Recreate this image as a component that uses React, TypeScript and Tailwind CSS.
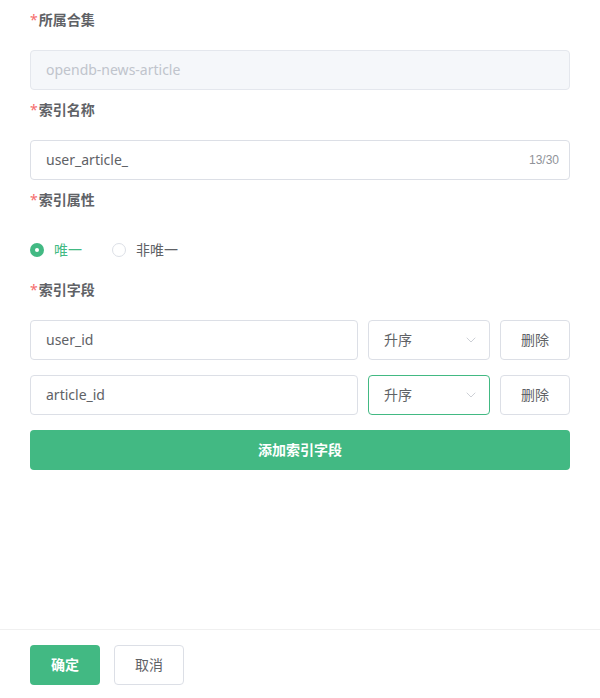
import { ChevronDown } from "lucide-react";

const font = { fontFamily: '"Noto Sans", "Noto Sans CJK SC", sans-serif' };

function Label({ text }: { text: string }) {
  return (
    <div className="h-10 flex items-center text-sm font-bold text-[#606266]">
      <span className="text-[#f56c6c] mr-[1px] font-normal">*</span>
      {text}
    </div>
  );
}

function SortSelect({ active }: { active?: boolean }) {
  return (
    <div
      className={`w-[122px] h-10 flex items-center justify-between pl-[15px] pr-[10px] rounded border bg-white text-sm text-[#606266] ${
        active ? "border-[#42b983]" : "border-[#dcdfe6]"
      }`}
    >
      <span>升序</span>
      <ChevronDown size={16} strokeWidth={1.2} className="text-[#c0c4cc]" />
    </div>
  );
}

function FieldRow({ name, active }: { name: string; active?: boolean }) {
  return (
    <div className="flex gap-[10px]">
      <div className="flex-1 h-10 flex items-center px-[15px] rounded border border-[#dcdfe6] text-sm text-[#606266]">
        {name}
      </div>
      <SortSelect active={active} />
      <button className="w-[70px] h-10 rounded border border-[#dcdfe6] bg-white text-sm text-[#606266]">
        删除
      </button>
    </div>
  );
}

export default function App() {
  return (
    <div className="w-[600px] h-[698px] bg-white flex flex-col" style={font}>
      <div className="flex-1 px-[30px]">
        <Label text="所属合集" />
        <div className="mt-[10px] h-10 flex items-center px-[15px] rounded border border-[#e4e7ed] bg-[#f5f7fa] text-sm text-[#c0c4cc]">
          opendb-news-article
        </div>

        <Label text="索引名称" />
        <div className="mt-[10px] h-10 flex items-center justify-between pl-[15px] pr-[10px] rounded border border-[#dcdfe6] text-sm text-[#606266]">
          <span>user_article_</span>
          <span className="text-xs text-[#909399] font-['Liberation_Sans',sans-serif]">13/30</span>
        </div>

        <Label text="索引属性" />
        <div className="mt-[10px] h-10 flex items-center text-sm">
          <span className="w-[14px] h-[14px] rounded-full bg-[#42b983] flex items-center justify-center">
            <span className="w-1 h-1 rounded-full bg-white" />
          </span>
          <span className="ml-[10px] text-[#42b983]">唯一</span>
          <span className="ml-[30px] w-[14px] h-[14px] rounded-full border border-[#dcdfe6] bg-white" />
          <span className="ml-[10px] text-[#606266]">非唯一</span>
        </div>

        <Label text="索引字段" />
        <div className="mt-[10px] flex flex-col gap-[15px]">
          <FieldRow name="user_id" />
          <FieldRow name="article_id" active />
          <button className="h-10 rounded bg-[#42b983] text-white text-sm font-bold">
            添加索引字段
          </button>
        </div>
      </div>

      <div className="border-t border-[#f0f0f0] px-[30px] pt-[15px] pb-[13px] flex gap-[14px]">
        <button className="w-[70px] h-10 rounded bg-[#42b983] text-white text-sm font-bold">
          确定
        </button>
        <button className="w-[70px] h-10 rounded border border-[#dcdfe6] bg-white text-sm text-[#606266]">
          取消
        </button>
      </div>
    </div>
  );
}
